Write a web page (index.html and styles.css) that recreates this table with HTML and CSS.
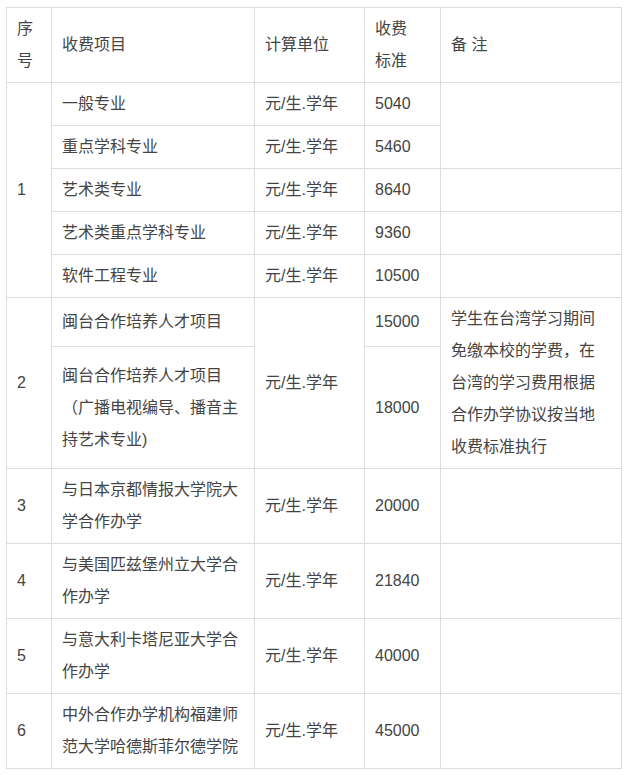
FILE: index.html
```html
<!DOCTYPE html>
<html lang="zh-CN">
<head>
<meta charset="utf-8">
<title>收费标准</title>
<link rel="stylesheet" href="styles.css">
</head>
<body>
<table class="fees">
  <colgroup>
    <col class="c-no">
    <col class="c-item">
    <col class="c-unit">
    <col class="c-std">
    <col class="c-note">
  </colgroup>
  <tbody>
    <tr>
      <td>序号</td>
      <td>收费项目</td>
      <td>计算单位</td>
      <td>收费<br>标准</td>
      <td>备 注</td>
    </tr>
    <tr>
      <td rowspan="5">1</td>
      <td>一般专业</td>
      <td>元/生.学年</td>
      <td>5040</td>
      <td rowspan="2"></td>
    </tr>
    <tr>
      <td>重点学科专业</td>
      <td>元/生.学年</td>
      <td>5460</td>
    </tr>
    <tr>
      <td>艺术类专业</td>
      <td>元/生.学年</td>
      <td>8640</td>
      <td></td>
    </tr>
    <tr>
      <td>艺术类重点学科专业</td>
      <td>元/生.学年</td>
      <td>9360</td>
      <td></td>
    </tr>
    <tr>
      <td>软件工程专业</td>
      <td>元/生.学年</td>
      <td>10500</td>
      <td></td>
    </tr>
    <tr class="r2a">
      <td rowspan="2">2</td>
      <td>闽台合作培养人才项目</td>
      <td rowspan="2">元/生.学年</td>
      <td>15000</td>
      <td rowspan="2" class="note">学生在台湾学习期间免缴本校的学费，在台湾的学习费用根据合作办学协议按当地收费标准执行</td>
    </tr>
    <tr>
      <td>闽台合作培养人才项目（广播电视编导、播音主持艺术专业)</td>
      <td>18000</td>
    </tr>
    <tr>
      <td>3</td>
      <td>与日本京都情报大学院大学合作办学</td>
      <td>元/生.学年</td>
      <td>20000</td>
      <td></td>
    </tr>
    <tr>
      <td>4</td>
      <td>与美国匹兹堡州立大学合作办学</td>
      <td>元/生.学年</td>
      <td>21840</td>
      <td></td>
    </tr>
    <tr>
      <td>5</td>
      <td>与意大利卡塔尼亚大学合作办学</td>
      <td>元/生.学年</td>
      <td>40000</td>
      <td></td>
    </tr>
    <tr>
      <td>6</td>
      <td>中外合作办学机构福建师范大学哈德斯菲尔德学院</td>
      <td>元/生.学年</td>
      <td>45000</td>
      <td></td>
    </tr>
  </tbody>
</table>
</body>
</html>
```
FILE: styles.css
```css
html, body {
  margin: 0;
  padding: 0;
  background: #ffffff;
}

body {
  padding: 7px 6px;
  font-family: "Liberation Sans", "Noto Sans CJK SC", sans-serif;
  font-size: 16px;
  color: #444444;
}

.fees {
  border-collapse: collapse;
  table-layout: fixed;
  width: 615px;
}

.fees td {
  border: 1px solid #dddddd;
  padding: 5px 10px;
  line-height: 32px;
  vertical-align: middle;
  text-align: left;
  word-break: normal;
}

.fees td.note {
  padding-right: 14px;
}

.c-no { width: 45px; }
.c-item { width: 203px; }
.c-unit { width: 110px; }
.c-std { width: 76px; }
.c-note { width: 181px; }

.r2a td {
  height: 38px;
}
```
